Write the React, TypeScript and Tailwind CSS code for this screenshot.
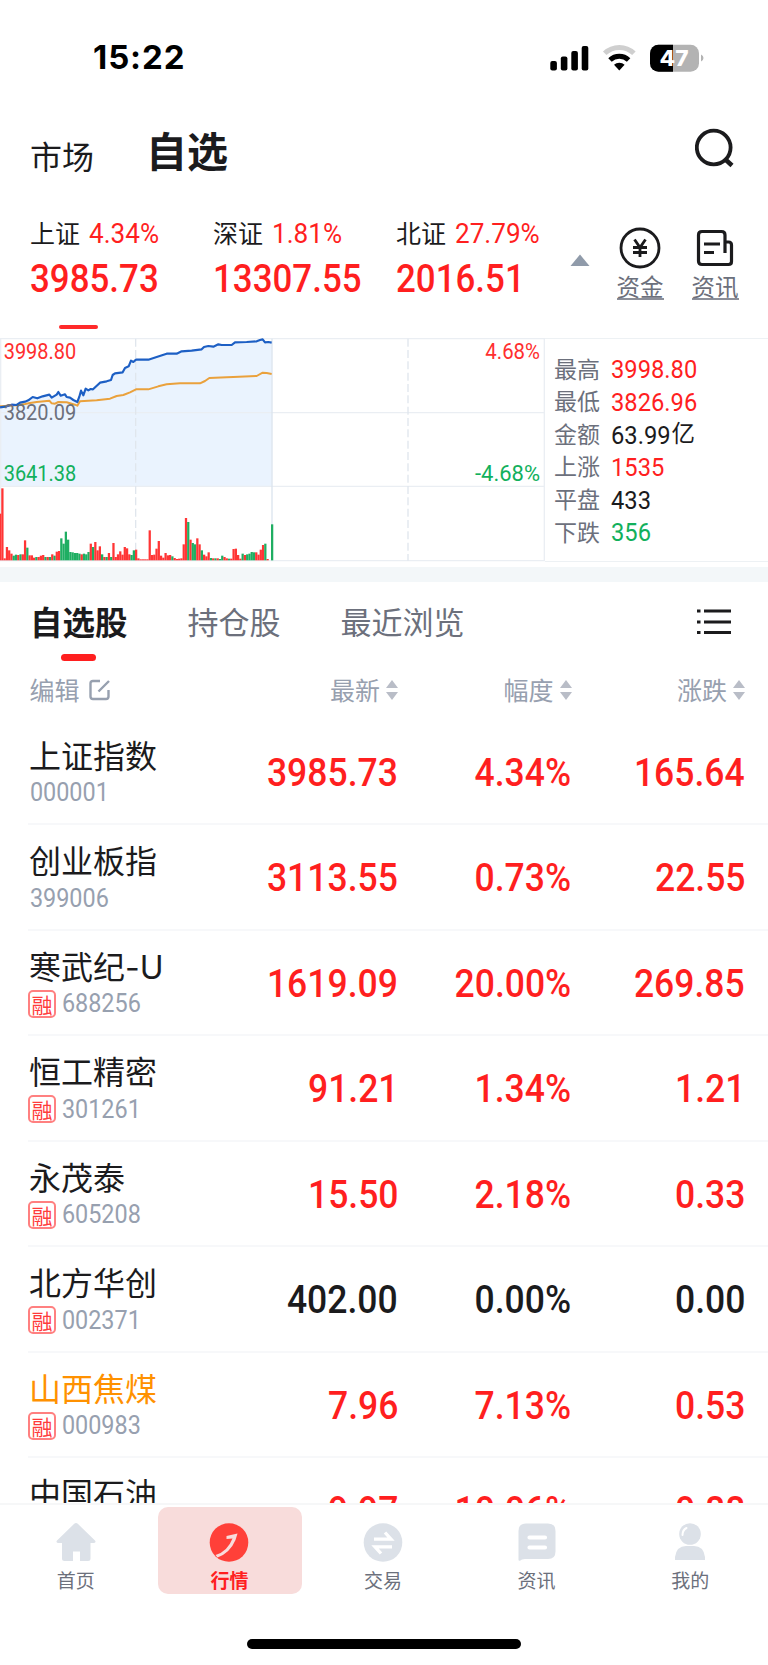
import type { ReactNode } from 'react';
import clsx from 'clsx';

const RED = 'text-[#ff1f1f]';
const BLACK = 'text-[#1b1b1d]';

const indices = [
  { name: '上证', pct: '4.34%', value: '3985.73', active: true },
  { name: '深证', pct: '1.81%', value: '13307.55', active: false },
  { name: '北证', pct: '27.79%', value: '2016.51', active: false },
];

const stats = [
  { label: '最高', value: '3998.80', color: RED },
  { label: '最低', value: '3826.96', color: RED },
  { label: '金额', value: '63.99', unit: '亿', color: BLACK },
  { label: '上涨', value: '1535', color: RED },
  { label: '平盘', value: '433', color: BLACK },
  { label: '下跌', value: '356', color: 'text-[#12b05c]' },
];

const stocks = [
  { name: '上证指数', code: '000001', price: '3985.73', pct: '4.34%', diff: '165.64' },
  { name: '创业板指', code: '399006', price: '3113.55', pct: '0.73%', diff: '22.55' },
  { name: '寒武纪-U', code: '688256', price: '1619.09', pct: '20.00%', diff: '269.85', margin: true },
  { name: '恒工精密', code: '301261', price: '91.21', pct: '1.34%', diff: '1.21', margin: true },
  { name: '永茂泰', code: '605208', price: '15.50', pct: '2.18%', diff: '0.33', margin: true },
  { name: '北方华创', code: '002371', price: '402.00', pct: '0.00%', diff: '0.00', margin: true, flat: true },
  { name: '山西焦煤', code: '000983', price: '7.96', pct: '7.13%', diff: '0.53', margin: true, marked: true },
  { name: '中国石油', code: '601857', price: '9.97', pct: '10.06%', diff: '0.88', margin: true },
];

// minute volume, positive = red, negative = green
const volumes = [
  140, 216, 6, 40, 30, 20, -14, -17, 16, -18, 18, 60, -38, 15, 15, 8, -10, 10, 14, 16, -10, 10, -10, 18, -14,
  26, 28, -66, -50, -86, -62, -25, -24, -22, -22, -20, 18, -20, -18, -25, 50, -40, 55, 30, 42, -18, 10, -10,
  22, -10, 52, 10, 18, 27, 17, 40, 36, 18, -16, -30, 32, 6, 3, 3, 3, 3, 90, 16, 17, 35, 58, 14, 8, 22, 15, 16,
  -12, 7, 4, 5, 6, 48, 127, -115, 62, -52, -48, 66, 48, -30, 17, 12, 24, -7, 6, -6, 6, -4, -14, 10, 6, -5, 5,
  34, 35, 16, 5, -20, 16, -18, -20, -25, -24, 24, 17, 32, 46, -50, 4, 0, -108,
];

const priceLine =
  '0,232 20,229 35,224 50,225 60,218 75,215 85,211 98,201 112,205 128,199 148,194 155,203 165,197 170,194 175,186 182,197 195,193 200,201 210,203 220,210 232,216 238,200 243,182 250,196 257,176 265,181 272,177 279,178 300,158 320,154 333,150 338,135 345,130 368,127 375,114 386,109 393,92 400,96 408,89 445,89 470,81 500,71 530,71 545,64 575,62 605,58 612,51 625,48 640,50 655,43 665,45 695,45 705,37 740,36 770,34 780,30 788,28 795,37 805,36 815,38';

const avgLine =
  '0,229 50,226 75,222 90,219 110,216 148,212 155,220 165,221 175,216 200,217 225,224 232,227 240,214 290,211 330,206 350,198 370,195 390,187 408,178 445,178 475,169 500,163 540,160 600,160 615,153 628,144 680,142 700,141 770,138 788,128 800,129 815,132';

function Num({ children, className }: { children: ReactNode; className?: string }) {
  return <span className={clsx('inline-block font-[Roboto] whitespace-nowrap', className)}>{children}</span>;
}

function StatusBar() {
  return (
    <div className="flex h-[114px] items-center justify-between pt-px pr-[64px] pl-[93px]">
      <span className="font-[Inter] text-[33px] font-bold tracking-[0.9px] text-black">15:22</span>
      <svg width="154" height="28" viewBox="0 0 154 28">
        <rect x="0.3" y="17" width="6.6" height="9.5" rx="2" />
        <rect x="10.8" y="12.5" width="6.6" height="14" rx="2" />
        <rect x="21.3" y="7" width="6.6" height="19.5" rx="2" />
        <rect x="31.7" y="2" width="6.6" height="24.5" rx="2" />
        <g fill="none" strokeWidth="5">
          <path d="M54.7 9.3a21 21 0 0 1 29.2 0" stroke="#cfcfcf" />
          <path d="M60 16a13.5 13.5 0 0 1 18.6 0" stroke="#000" />
        </g>
        <path d="M64 20.8a7.6 7.6 0 0 1 10.6 0L69.3 26.5z" />
        <clipPath id="battery">
          <rect x="100" y="0.7" width="49" height="27" rx="8.5" />
        </clipPath>
        <g clipPath="url(#battery)">
          <rect x="100" y="0" width="49" height="28" fill="#b3b3b3" />
          <rect x="100" y="0" width="23" height="28" />
        </g>
        <path d="M151 10.5q2.5 1 2.5 3.5t-2.5 3.5z" fill="#b3b3b3" />
        <text
          x="109.500"
          y="22"
          textLength="29"
          lengthAdjust="spacingAndGlyphs"
          fill="#fff"
          className="font-[Inter] text-[21px] font-extrabold"
        >
          47
        </text>
      </svg>
    </div>
  );
}

function TopNav() {
  return (
    <header className="flex h-[86px] items-start justify-between pr-[33px] pl-[30px]">
      <div className={clsx('flex items-start', BLACK)}>
        <span className="pt-[6px] text-[32px] leading-[70px]">市场</span>
        <span className="ml-[52px] text-[41px] leading-[70px] font-bold">自选</span>
      </div>
      <svg width="40" height="40" viewBox="0 0 40 40" className="mt-[14px]" fill="none" stroke="#1b1b1d">
        <circle cx="18.7" cy="19.5" r="16.9" strokeWidth="3.8" />
        <path d="M31 32l6 5.500" strokeWidth="4.500" />
      </svg>
    </header>
  );
}

function IndexBar() {
  return (
    <section className="flex h-[138px] items-start pl-[30px]">
      {indices.map((n) => (
        <div key={n.name} className="flex w-[183px] flex-col">
          <div className="flex h-[66px] items-center">
            <span className={clsx('text-[25px]', BLACK)}>{n.name}</span>
            <Num className={clsx('ml-[9px] origin-left scale-x-[0.95] pt-px text-[27.500px]', RED)}>{n.pct}</Num>
          </div>
          <Num className={clsx('origin-left scale-x-[0.895] text-[39px] leading-[27px] font-medium', RED)}>
            {n.value}
          </Num>
          {n.active && <span className="mt-[32px] ml-[29px] h-[4px] w-[39px] rounded-full bg-[#ff2a2a]" />}
        </div>
      ))}
      <svg width="20" height="12" viewBox="0 0 20 12" className="mt-[54px] -ml-[9px]">
        <path d="M10 0.500L19.500 12H0.500z" fill="#909baa" />
      </svg>
      <div className="ml-[26px] flex w-[48px] flex-col items-center pt-[27px]">
        <svg width="42" height="42" viewBox="0 0 42 42" fill="none" stroke="#1b1b1d">
          <circle cx="21" cy="21" r="19" strokeWidth="2.8" />
          <path d="M15.500 12.500l5.500 8 5.500-8M21 20.500V30M14 20.500h14M14 25.500h14" strokeWidth="2.8" />
        </svg>
        <span className="mt-[2px] h-[29px] border-b-2 border-[#8b8e98] text-[23.500px] leading-[30px] text-[#6c707c]">
          资金
        </span>
      </div>
      <div className="ml-[27px] flex w-[48px] flex-col items-center pt-[27px]">
        <svg width="42" height="42" viewBox="0 0 42 42" fill="none" stroke="#1b1b1d" strokeWidth="3.200">
          <path d="M31 26V8q0-3.500-3.500-3.500H8Q4.500 4.500 4.500 8v26q0 3.500 3.500 3.500h26.500q3 0 3-3V18q0-3-3-3H31" />
          <path d="M10 17h16M10 25.500h10" strokeWidth="2.800" />
        </svg>
        <span className="mt-[2px] h-[29px] border-b-2 border-[#8b8e98] text-[23.500px] leading-[30px] text-[#6c707c]">
          资讯
        </span>
      </div>
    </section>
  );
}

function Chart() {
  return (
    <svg width="545" height="224" viewBox="0 24 1635 672" className="shrink-0" fill="none">
      <polygon points={`${priceLine} 815,468 0,468`} fill="#eaf3fe" />
      <g stroke="#eaeef3" strokeWidth="4">
        <path d="M0 26H1635M0 248H1632M0 469H1632M0 692H1635M2 26V692M1633 26V692" />
        <path d="M816 26V692" stroke="#dbe4ee" />
        <path d="M407 26V692M1224 26V692" stroke="#e0e6ed" strokeDasharray="24 10" />
      </g>
      {volumes.map((v, i) => (
        <rect
          key={i}
          x={i * 6.8 - 3}
          y={691 - Math.abs(v)}
          width="6.8"
          height={Math.abs(v)}
          fill={v > 0 ? '#ff3535' : '#1fae62'}
        />
      ))}
      <polyline points={avgLine} stroke="#eaa13c" strokeWidth="6" strokeLinejoin="round" />
      <polyline points={priceLine} stroke="#1d5fc4" strokeWidth="6.500" strokeLinejoin="round" />
      <g className="font-[Roboto] text-[65px]">
        <text x="11" y="87" textLength="218" lengthAdjust="spacingAndGlyphs" fill="#ff2f2f">
          3998.80
        </text>
        <text x="11" y="269" textLength="218" lengthAdjust="spacingAndGlyphs" fill="#6c707c">
          3820.09
        </text>
        <text x="11" y="453" textLength="218" lengthAdjust="spacingAndGlyphs" fill="#12b05c">
          3641.38
        </text>
        <text x="1456" y="87" textLength="164" lengthAdjust="spacingAndGlyphs" fill="#ff2f2f">
          4.68%
        </text>
        <text x="1425" y="453" textLength="195" lengthAdjust="spacingAndGlyphs" fill="#12b05c">
          -4.68%
        </text>
      </g>
    </svg>
  );
}

function MarketPanel() {
  return (
    <section className="flex h-[224px]">
      <Chart />
      <dl className="flex-1 border-y border-[#edf1f4] pt-[14px] pl-[9px]">
        {stats.map((s) => (
          <div key={s.label} className="flex h-[32.600px] items-center">
            <dt className="w-[57px] pb-[3px] text-[23px] text-[#6c707c]">{s.label}</dt>
            <dd className={clsx('flex items-center text-[26.500px]', s.color)}>
              <Num className="origin-left scale-x-[0.895]">{s.value}</Num>
              {s.unit && <span className="-ml-[6px] pb-[3px] text-[23.500px]">{s.unit}</span>}
            </dd>
          </div>
        ))}
      </dl>
    </section>
  );
}

function Tabs() {
  return (
    <nav className="flex h-[80px] items-start pr-[37px] pl-[30px] text-[31px] leading-[77px] text-[#6c707c]">
      <div className={clsx('flex flex-col items-center text-[32.500px] font-bold', BLACK)}>
        自选股
        <span className="-mt-[5px] h-[7px] w-[35px] rounded-full bg-[#ff1f1f]" />
      </div>
      <span className="ml-[60px]">持仓股</span>
      <span className="ml-[60px]">最近浏览</span>
      <svg width="34" height="28" viewBox="0 0 34 28" className="mt-[26px] ml-auto" stroke="#1b1b1d" strokeWidth="3.200">
        <path d="M0 3h3.500M0 14h3.500M0 24.500h3.500M7 3h27M7 14h27M7 24.500h27" />
      </svg>
    </nav>
  );
}

function SortLabel({ children }: { children: ReactNode }) {
  return (
    <span className="flex w-[173.500px] items-center justify-end">
      {children}
      <svg width="12" height="20" viewBox="0 0 12 20" className="ml-[6px]" fill="#b9bdc7">
        <path d="M6 0l6 8H0zM6 20l6-8H0z" />
      </svg>
    </span>
  );
}

function ListHeader() {
  return (
    <div className="flex h-[57.500px] items-center pr-[23px] pb-[2px] pl-[29.500px] text-[25px] text-[#97a0af]">
      编辑
      <svg
        width="22"
        height="22"
        viewBox="0 0 22 22"
        className="mr-auto ml-[9px]"
        fill="none"
        stroke="#97a0af"
        strokeWidth="2.400"
      >
        <path d="M11 2H4Q1.500 2 1.500 4.500v13Q1.500 20 4 20h13q2.500 0 2.500-2.500V11M9.500 12.500L20 2" />
      </svg>
      <SortLabel>最新</SortLabel>
      <SortLabel>幅度</SortLabel>
      <SortLabel>涨跌</SortLabel>
    </div>
  );
}

function StockRow({ stock }: { stock: (typeof stocks)[number] }) {
  return (
    <li className="ml-[28px] flex h-[105.500px] shrink-0 border-b-2 border-[#f7f8fa] pr-[23px] pl-[1px]">
      <div className="flex flex-1 flex-col pt-[20px]">
        <span
          className={clsx(
            "font-[Inter,'Noto_Sans_CJK_SC'] text-[32px] leading-[34px] whitespace-nowrap",
            stock.marked ? 'text-[#ff9100]' : BLACK,
          )}
        >
          {stock.name}
        </span>
        <span className="mt-[5px] flex h-[28px] items-center">
          {stock.margin && (
            <span className="mr-[5px] -ml-[1px] flex size-[28px] shrink-0 items-center justify-center rounded-[5px] border-2 border-[#ff8080] text-[21px] leading-[24px] text-[#ff3b3b]">
              融
            </span>
          )}
          <Num className="origin-left scale-x-[0.9] pl-[1px] text-[26px] text-[#97a0af]">{stock.code}</Num>
        </span>
      </div>
      <div className={clsx('flex text-[39px] leading-[99px] font-medium', stock.flat ? BLACK : RED)}>
        {[stock.price, stock.pct, stock.diff].map((v, i) => (
          <span key={i} className="w-[173.500px] text-right">
            <Num className="origin-right scale-x-[0.91]">{v}</Num>
          </span>
        ))}
      </div>
    </li>
  );
}

const tabs = [
  {
    label: '首页',
    icon: (
      <path d="M18.200.8q1.800-1.600 3.600 0L39 17.500q1.500 2-1 2.500h-3.500v15.500q0 2.500-2.500 2.500h-8v-9.500h-7V38H8.500Q6 38 6 35.500V20H2q-2.500-.5-1-2.500z" />
    ),
  },
  {
    label: '行情',
    active: true,
    icon: (
      <>
        <circle cx="20" cy="19.5" r="19.3" />
        <path d="M17.500 13L28.500 10.500L26.500 17Q21 30 8.500 34.500L6.500 32Q18.500 28.500 23.500 15.500L17.500 16z" fill="#f8dcdb" />
      </>
    ),
  },
  {
    label: '交易',
    icon: (
      <>
        <circle cx="20" cy="19.5" r="19.3" />
        <path d="M11 16.200h17L22 9.500M29 23.800H12l6 6.700" fill="none" stroke="#fff" strokeWidth="3.300" />
      </>
    ),
  },
  {
    label: '资讯',
    icon: (
      <>
        <path d="M9 .5h22q7.500 0 7.500 7.500v20.500q0 7.500-7.500 7.500H8q-3.500 0-5 1.700-1.500.5-1.500-1V8Q1.500.5 9 .5z" />
        <path d="M12.500 14.500h15.500M12.500 24.500h15.500" stroke="#fff" strokeWidth="4.200" strokeLinecap="round" />
      </>
    ),
  },
  {
    label: '我的',
    icon: (
      <>
        <circle cx="20" cy="11" r="10.800" />
        <path d="M12.500 12q0-5 4-7" fill="none" stroke="#fff" strokeWidth="2" strokeLinecap="round" />
        <path d="M5 37V34q1.500-11 11-11h8q9.500 0 11 11v3z" />
      </>
    ),
  },
];

function TabBar() {
  return (
    <nav className="grid h-[162px] shrink-0 grid-cols-5 grid-rows-[89px_1fr] border-t-2 border-[#f6f7f8] bg-white">
      {tabs.map((t) => (
        <div
          key={t.label}
          className={clsx(
            'mx-auto mt-[2px] flex h-[87px] w-[144px] flex-col items-center rounded-[10px] pt-[16px] pr-[2px] text-[19px] leading-[35px]',
            t.active ? 'bg-[#f8dcdb] font-bold text-[#ff1f1f]' : 'text-[#6c707c]',
          )}
        >
          <svg width="40" height="39" viewBox="0 0 40 39" fill={t.active ? '#ff4039' : '#dce1e8'} className="shrink-0">
            {t.icon}
          </svg>
          {t.label}
        </div>
      ))}
      <span className="col-span-5 mx-auto mt-[45px] h-[10px] w-[274px] rounded-full bg-black" />
    </nav>
  );
}

export default function App() {
  return (
    <main className="flex h-[1665px] w-[768px] flex-col overflow-hidden bg-white font-['Noto_Sans_CJK_SC',sans-serif]">
      <StatusBar />
      <TopNav />
      <IndexBar />
      <MarketPanel />
      <div className="mt-[5px] h-[15px] shrink-0 bg-[#f3f7f9]" />
      <Tabs />
      <ListHeader />
      <ul className="flex min-h-0 flex-1 flex-col overflow-hidden">
        {stocks.map((s) => (
          <StockRow key={s.code} stock={s} />
        ))}
      </ul>
      <TabBar />
    </main>
  );
}
